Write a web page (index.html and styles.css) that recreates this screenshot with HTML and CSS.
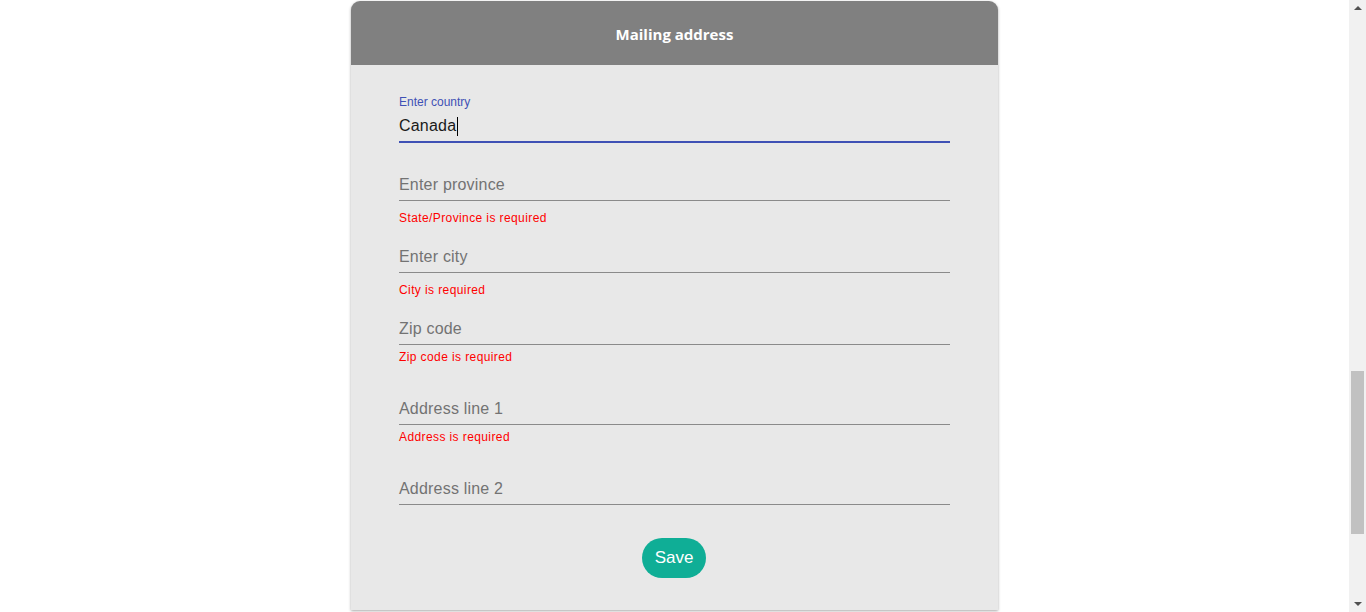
FILE: index.html
```html
<!DOCTYPE html>
<html>
<head>
<meta charset="utf-8">
<link rel="stylesheet" href="styles.css">
</head>
<body>
<div class="page">
  <main class="main">
    <section class="card">
      <header class="card-head">Mailing address</header>
      <form class="card-body">
        <div class="field f-first">
          <div class="label">Enter country</div>
          <div class="input focused"><span class="value">Canada</span><span class="caret"></span></div>
        </div>
        <div class="field f-gap25">
          <div class="input"><span class="ph">Enter province</span></div>
          <div class="error">State/Province is required</div>
        </div>
        <div class="field f-gap16">
          <div class="input"><span class="ph">Enter city</span></div>
          <div class="error">City is required</div>
        </div>
        <div class="field f-gap16">
          <div class="input"><span class="ph">Zip code</span></div>
          <div class="error tight">Zip code is required</div>
        </div>
        <div class="field f-gap29">
          <div class="input"><span class="ph">Address line 1</span></div>
          <div class="error tight">Address is required</div>
        </div>
        <div class="field f-gap29">
          <div class="input"><span class="ph">Address line 2</span></div>
        </div>
        <div class="actions">
          <button type="button" class="save">Save</button>
        </div>
      </form>
    </section>
  </main>
  <div class="scrollbar">
    <div class="arrow up"></div>
    <div class="track"><div class="thumb"></div></div>
    <div class="arrow down"></div>
  </div>
</div>
</body>
</html>
```

FILE: styles.css
```css
html, body {
  margin: 0;
  padding: 0;
  height: 100%;
  overflow: hidden;
  background: #ffffff;
  font-family: "Liberation Sans", Arial, sans-serif;
}
.page {
  display: flex;
  height: 612px;
}
.main {
  flex: 1;
  display: flex;
  justify-content: center;
  align-items: flex-start;
}
.card {
  width: 647px;
  margin-top: 1px;
  height: 609px;
  background: #e8e8e8;
  border-radius: 9px 9px 0 0;
  box-shadow: 0 1px 3px rgba(0,0,0,0.35);
  display: flex;
  flex-direction: column;
}
.card-head {
  height: 64px;
  background: #808080;
  border-radius: 9px 9px 0 0;
  color: #ffffff;
  font-family: "Open Sans", sans-serif;
  font-weight: 700;
  font-size: 15px;
  display: flex;
  align-items: center;
  justify-content: center;
  padding-top: 1px;
  box-sizing: border-box;
}
.card-body {
  margin: 0;
  padding: 0 48px;
  display: flex;
  flex-direction: column;
}
.field { display: flex; flex-direction: column; }
.f-first { margin-top: 30px; }
.f-gap25 { margin-top: 25px; }
.f-gap16 { margin-top: 15px; }
.f-gap29 { margin-top: 28px; }
.label {
  font-size: 12px;
  line-height: 14px;
  color: #3f51b5;
}
.input {
  height: 33px;
  padding-top: 2px;
  box-sizing: border-box;
  display: flex;
  align-items: center;
  border-bottom: 1px solid #8a8a8a;
  font-size: 16px;
  letter-spacing: 0.2px;
}
.input.focused {
  height: 34px;
  border-bottom: 2px solid #3f51b5;
}
.value { color: #1a1a1a; }
.caret {
  width: 1px;
  height: 19px;
  background: #000;
  margin-left: 1px;
}
.ph { color: #737373; }
.error {
  margin-top: 10px;
  font-size: 12px;
  line-height: 14px;
  letter-spacing: 0.4px;
  color: #ff0000;
}
.error.tight { margin-top: 5px; }
.actions {
  margin-top: 33px;
  display: flex;
  justify-content: center;
  padding-right: 1px;
}
.save {
  width: 64px;
  height: 40px;
  border: none;
  border-radius: 20px;
  background: #0fae96;
  color: #ffffff;
  font-family: "Liberation Sans", Arial, sans-serif;
  font-size: 17px;
  padding: 0;
}
.scrollbar {
  width: 17px;
  background: #f1f1f1;
  display: flex;
  flex-direction: column;
  align-items: center;
}
.arrow {
  width: 0;
  height: 0;
  border-left: 4px solid transparent;
  border-right: 4px solid transparent;
}
.arrow.up {
  margin-top: 6px;
  border-bottom: 4px solid #505050;
}
.arrow.down {
  margin-bottom: 6px;
  border-top: 4px solid #505050;
}
.track {
  flex: 1;
  width: 100%;
  display: flex;
  flex-direction: column;
  align-items: center;
  padding-top: 361px;
  box-sizing: border-box;
}
.thumb {
  width: 13px;
  height: 163px;
  background: #c1c1c1;
}
```
